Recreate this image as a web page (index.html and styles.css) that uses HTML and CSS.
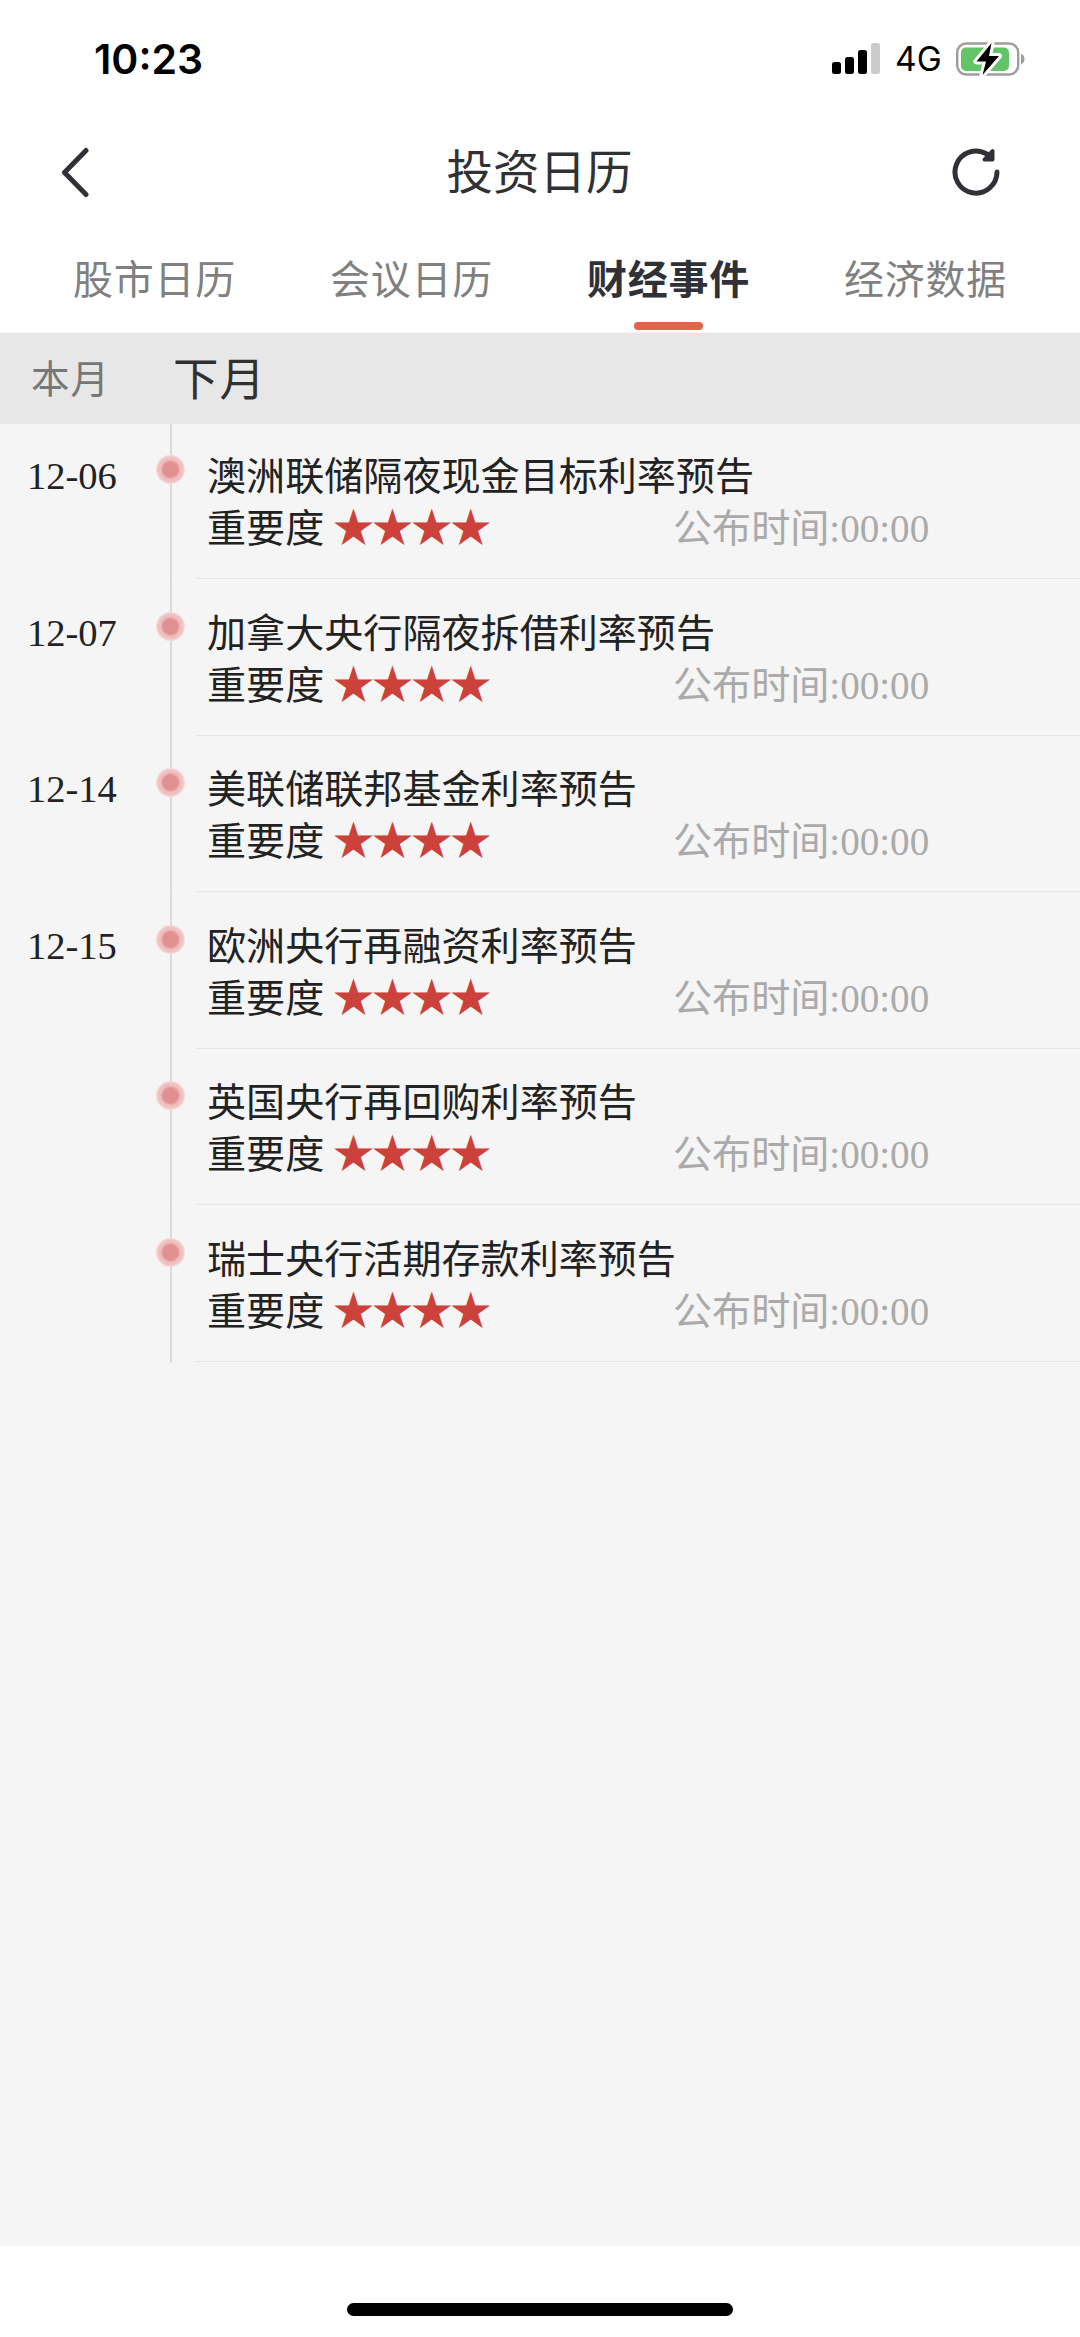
FILE: index.html
```html
<!DOCTYPE html>
<html lang="zh-CN">
<head>
    <meta charset="UTF-8">
    <meta name="viewport" content="width=device-width, initial-scale=1.0">
    <title>投资日历</title>
    <link rel="stylesheet" href="styles.css">
</head>
<body>
    <div class="status">
        <span class="clock">10:23</span>
        <div class="status-icons">
            <svg class="signal" width="48" height="32" viewBox="0 0 48 32">
                <rect x="0" y="19" width="9" height="12" rx="2.5"/>
                <rect x="13" y="14" width="9" height="17" rx="2.5"/>
                <rect x="26" y="7" width="9" height="24" rx="2.5"/>
                <rect x="39" y="0" width="9" height="31" rx="2.5" fill="#cbcbcb"/>
            </svg>
            <span class="network">4G</span>
            <svg class="battery" width="69" height="36" viewBox="0 0 69 36">
                <rect x="1.200" y="2.500" width="61" height="31" rx="9" fill="none" stroke="#9d9d9d" stroke-width="2.400"/>
                <rect x="5" y="6.500" width="48" height="23.500" rx="5" fill="#62c466"/>
                <path d="M65 12.500q3.500 1.500 3.500 5.500t-3.500 5.500z" fill="#9d9d9d"/>
                <path d="M35.500 2L20.500 20.500h9.500l-3.500 13.500 16.500-19H33z" fill="#000" stroke="#fff" stroke-width="6" paint-order="stroke" stroke-linejoin="round"/>
            </svg>
        </div>
    </div>
    <div class="navbar">
        <svg class="back" width="32" height="52" viewBox="0 0 32 52">
            <path d="M26 4.500L4.500 26.500l21.500 22"/>
        </svg>
        <h1 class="title">投资日历</h1>
        <svg class="refresh" width="52" height="52" viewBox="0 0 52 52">
            <path d="M46 26A21 21 0 1 1 36 8.200"/>
            <path class="arrow" d="M41.500 5v8.500H33.500z"/>
        </svg>
    </div>
    <div class="tabs">
        <a class="tab">股市日历</a>
        <a class="tab">会议日历</a>
        <a class="tab active">财经事件</a>
        <a class="tab">经济数据</a>
    </div>
    <div class="months">
        <a class="month">本月</a>
        <a class="month current">下月</a>
    </div>
    <div class="list">
        <div class="event">
            <div class="date">12-06</div>
            <div class="line"><i class="dot"></i></div>
            <div class="info">
                <div class="name">澳洲联储隔夜现金目标利率预告</div>
                <div class="meta"><span class="level">重要度 <b class="stars">★★★★</b></span><span class="time">公布时间:00:00</span></div>
            </div>
        </div>
        <div class="event">
            <div class="date">12-07</div>
            <div class="line"><i class="dot"></i></div>
            <div class="info">
                <div class="name">加拿大央行隔夜拆借利率预告</div>
                <div class="meta"><span class="level">重要度 <b class="stars">★★★★</b></span><span class="time">公布时间:00:00</span></div>
            </div>
        </div>
        <div class="event">
            <div class="date">12-14</div>
            <div class="line"><i class="dot"></i></div>
            <div class="info">
                <div class="name">美联储联邦基金利率预告</div>
                <div class="meta"><span class="level">重要度 <b class="stars">★★★★</b></span><span class="time">公布时间:00:00</span></div>
            </div>
        </div>
        <div class="event">
            <div class="date">12-15</div>
            <div class="line"><i class="dot"></i></div>
            <div class="info">
                <div class="name">欧洲央行再融资利率预告</div>
                <div class="meta"><span class="level">重要度 <b class="stars">★★★★</b></span><span class="time">公布时间:00:00</span></div>
            </div>
        </div>
        <div class="event">
            <div class="date"></div>
            <div class="line"><i class="dot"></i></div>
            <div class="info">
                <div class="name">英国央行再回购利率预告</div>
                <div class="meta"><span class="level">重要度 <b class="stars">★★★★</b></span><span class="time">公布时间:00:00</span></div>
            </div>
        </div>
        <div class="event">
            <div class="date"></div>
            <div class="line"><i class="dot"></i></div>
            <div class="info">
                <div class="name">瑞士央行活期存款利率预告</div>
                <div class="meta"><span class="level">重要度 <b class="stars">★★★★</b></span><span class="time">公布时间:00:00</span></div>
            </div>
        </div>
    </div>
    <div class="home"><div class="home-bar"></div></div>
</body>
</html>
```
FILE: styles.css
```css
* {
    box-sizing: border-box;
}
body {
    margin: 0;
    height: 2337px;
    display: flex;
    flex-direction: column;
    background: #fff;
    color: #222;
    font-family: "Liberation Serif", "Noto Sans CJK SC", serif;
    overflow: hidden;
}
.status {
    height: 118px;
    padding: 0 55px 0 94px;
    display: flex;
    justify-content: space-between;
    align-items: center;
    color: #000;
    font-family: Inter, sans-serif;
}
.clock {
    font-size: 41px;
    font-weight: 600;
}
.status-icons {
    display: flex;
    align-items: center;
}
.network {
    width: 61px;
    padding-left: 15px;
    margin-right: 15px;
    font-size: 33.5px;
    white-space: nowrap;
}
.navbar {
    height: 108px;
    padding: 0 77px 0 60px;
    display: flex;
    justify-content: space-between;
    align-items: center;
}
.back,
.refresh {
    fill: none;
    stroke: #303136;
    stroke-width: 5;
    stroke-linecap: round;
    stroke-linejoin: round;
}
.refresh .arrow {
    fill: #303136;
    stroke-width: 4;
}
.title {
    margin: 0;
    padding: 4px 0 0 36px;
    color: #303136;
    font-size: 46.5px;
    font-weight: 400;
    line-height: 60px;
}
.tabs {
    height: 107px;
    padding: 0 26px;
    display: grid;
    grid-template-columns: repeat(4, 257px);
    border-bottom: 1px solid #f5f5f5;
}
.tab {
    height: 104px;
    display: flex;
    flex-direction: column;
    align-items: center;
    color: #808080;
    font-size: 40px;
    letter-spacing: 0.7px;
    line-height: 58px;
    padding-top: 26px;
}
.active {
    color: #303136;
    font-weight: 700;
}
.active::after {
    content: "";
    width: 69px;
    height: 9px;
    margin-top: 12px;
    border-radius: 4px;
    background: #e5614a;
}
.months {
    height: 91px;
    padding: 0 0 5px 31px;
    display: flex;
    align-items: center;
    background: #e7e7e7;
}
.month {
    width: 142px;
    color: #777;
    font-size: 38.5px;
    letter-spacing: 1px;
}
.current {
    color: #303030;
    font-size: 45.5px;
}
.list {
    flex: 1;
    background: #f5f5f5;
}
.event {
    height: 156.5px;
    display: flex;
}
.date {
    width: 156px;
    padding: 29px 0 0 27px;
    font-size: 38.5px;
    line-height: 46px;
}
.line {
    width: 29px;
    display: flex;
    flex-direction: column;
    align-items: center;
    background: linear-gradient(#dadada, #dadada) center / 2px 100% no-repeat;
}
.dot {
    width: 29px;
    height: 29px;
    margin-top: 31px;
    border-radius: 50%;
    background: radial-gradient(circle, #e18f90 0 7px, #eaa9aa 9px, #f0bfc0 10px 12px, #f5d8d8 14px);
}
.info {
    flex: 1;
    height: 155px;
    margin-left: 11px;
    padding: 27px 0 0 11px;
    border-bottom: 1.5px solid #e6e6e6;
    font-size: 39.1px;
    line-height: 52px;
}
.meta {
    display: flex;
}
.level {
    width: 466px;
}
.stars {
    color: #cc4139;
    font-size: 41px;
    font-weight: 400;
    letter-spacing: -1.9px;
    margin-left: -1px;
    line-height: 1;
}
.time {
    color: #aaa;
}
.home {
    height: 91px;
    padding-top: 57px;
    display: flex;
    justify-content: center;
}
.home-bar {
    width: 386px;
    height: 13px;
    border-radius: 7px;
    background: #000;
}
```
